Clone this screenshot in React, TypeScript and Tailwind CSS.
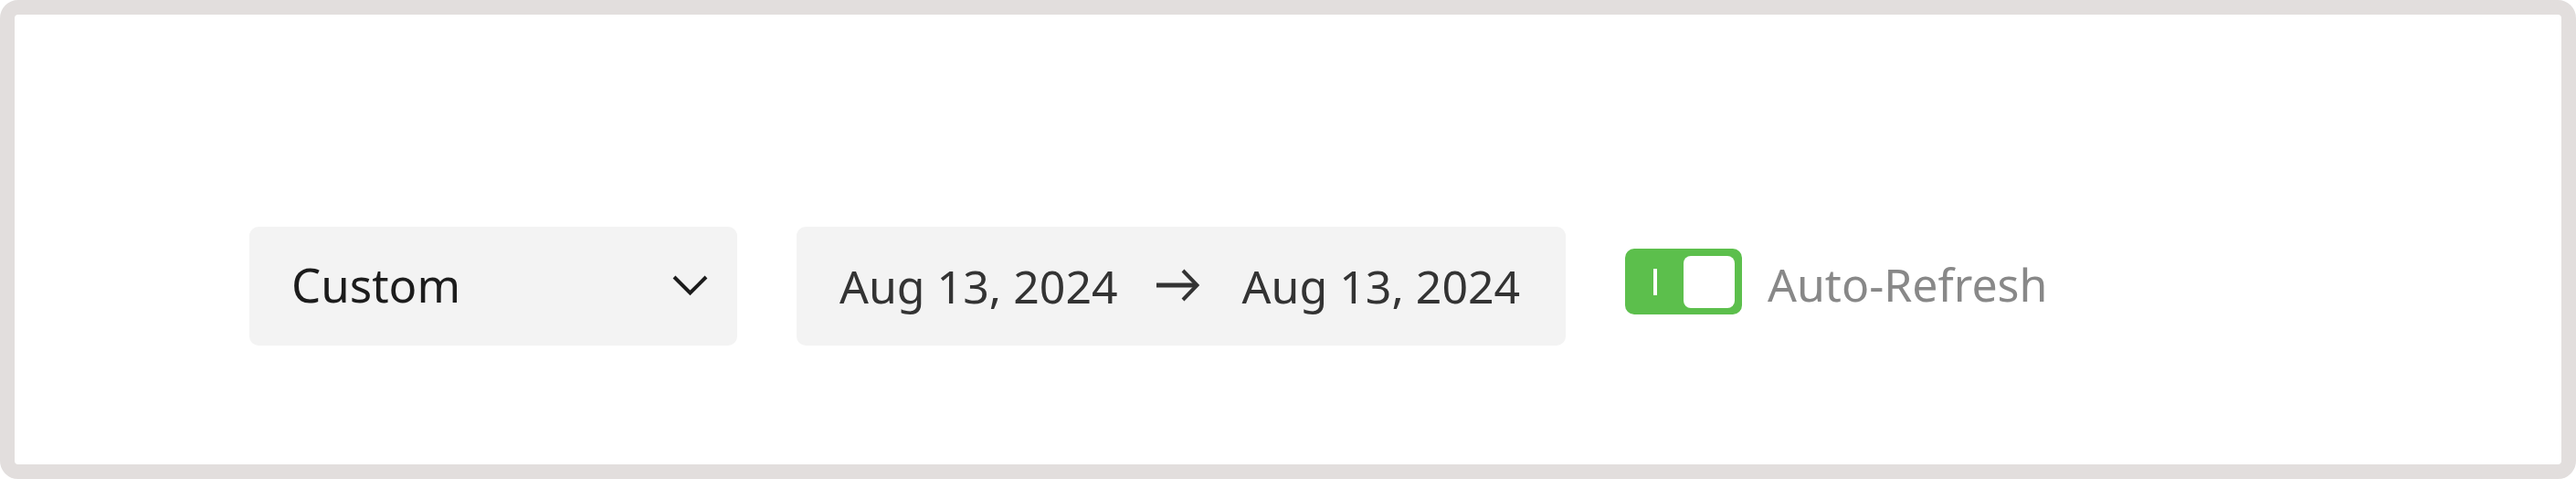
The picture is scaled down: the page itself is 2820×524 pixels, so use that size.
import React from "react";

export default function App() {
  const font = { fontFamily: '"Noto Sans", "Open Sans", sans-serif' };
  return (
    <div className="w-[2820px] h-[524px] bg-white">
      <div
        className="w-full h-full border-[16px] border-[#e2dedd] rounded-[20px] bg-white flex items-start pt-[232px] pl-[257px]"
        style={font}
      >
        <div className="flex items-center">
          <div className="w-[534px] h-[130px] rounded-[10px] bg-[#f3f3f3] flex items-center justify-between pl-[46px] pr-[32px]">
            <span className="text-[51px] leading-none text-[#1c1c1c] -mt-[4px]">Custom</span>
            <svg width="39" height="24" viewBox="0 0 39 24" fill="none" className="-mt-[2px]">
              <path d="M2 3 L19.5 20.5 L37 3" stroke="#1c1c1c" strokeWidth="4" />
            </svg>
          </div>
          <div className="ml-[65px] w-[842px] h-[130px] rounded-[10px] bg-[#f3f3f3] flex items-center pl-[47px]">
            <span className="text-[50px] leading-none text-[#333333]">Aug 13, 2024</span>
            <svg className="ml-[42px] -mt-[2px]" width="47" height="36" viewBox="0 0 47 36" fill="none">
              <path d="M0 18 L43 18" stroke="#333333" strokeWidth="5" />
              <path d="M29 2 L44.5 18 L29 34" stroke="#333333" strokeWidth="4" />
            </svg>
            <span className="ml-[47px] text-[50px] leading-none text-[#333333]">Aug 13, 2024</span>
          </div>
          <div className="ml-[65px] w-[128px] h-[72px] rounded-[10px] bg-[#5cbf4c] flex items-center justify-between pl-[31px] pr-[8px] -mt-[10px]">
            <div className="w-[4px] h-[29px] bg-white" />
            <div className="w-[56px] h-[57px] rounded-[8px] bg-white" />
          </div>
          <span className="ml-[28px] text-[50px] leading-none text-[#888888] -mt-[4px]">Auto-Refresh</span>
        </div>
      </div>
    </div>
  );
}
